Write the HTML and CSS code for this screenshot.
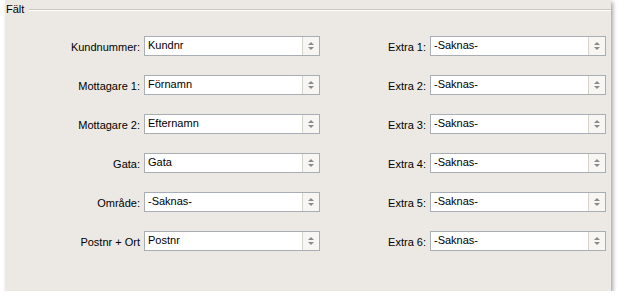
FILE: index.html
```html
<!DOCTYPE html>
<html lang="sv">
<head>
    <meta charset="UTF-8">
    <title>Fält</title>
    <link rel="stylesheet" href="styles.css">
</head>
<body>
    <div class="panel">
        <div class="legend"><span>Fält</span><div class="rule"></div></div>
        <div class="fields">
            <label>Kundnummer:</label>
            <div class="combo"><span>Kundnr</span><div class="spin"><i class="up"></i><i class="down"></i></div></div>
            <label>Extra 1:</label>
            <div class="combo"><span>-Saknas-</span><div class="spin"><i class="up"></i><i class="down"></i></div></div>

            <label>Mottagare 1:</label>
            <div class="combo"><span>Förnamn</span><div class="spin"><i class="up"></i><i class="down"></i></div></div>
            <label>Extra 2:</label>
            <div class="combo"><span>-Saknas-</span><div class="spin"><i class="up"></i><i class="down"></i></div></div>

            <label>Mottagare 2:</label>
            <div class="combo"><span>Efternamn</span><div class="spin"><i class="up"></i><i class="down"></i></div></div>
            <label>Extra 3:</label>
            <div class="combo"><span>-Saknas-</span><div class="spin"><i class="up"></i><i class="down"></i></div></div>

            <label>Gata:</label>
            <div class="combo"><span>Gata</span><div class="spin"><i class="up"></i><i class="down"></i></div></div>
            <label>Extra 4:</label>
            <div class="combo"><span>-Saknas-</span><div class="spin"><i class="up"></i><i class="down"></i></div></div>

            <label>Område:</label>
            <div class="combo"><span>-Saknas-</span><div class="spin"><i class="up"></i><i class="down"></i></div></div>
            <label>Extra 5:</label>
            <div class="combo"><span>-Saknas-</span><div class="spin"><i class="up"></i><i class="down"></i></div></div>

            <label>Postnr + Ort</label>
            <div class="combo"><span>Postnr</span><div class="spin"><i class="up"></i><i class="down"></i></div></div>
            <label>Extra 6:</label>
            <div class="combo"><span>-Saknas-</span><div class="spin"><i class="up"></i><i class="down"></i></div></div>
        </div>
    </div>
</body>
</html>
```

FILE: styles.css
```css
body {
    margin: 0;
    background: #fff;
    font-family: "Liberation Sans", Arial, sans-serif;
    font-size: 11px;
    color: #000;
}
.panel {
    margin-left: 5px;
    width: 606px;
    height: 291px;
    background: #ece9e4;
    box-shadow: 2px 2px 4px rgba(0, 0, 0, 0.35);
    box-sizing: border-box;
}
.legend { display: flex; align-items: center; padding: 3px 0 0 1px; height: 12px; }
.legend span { line-height: 12px; }
.rule { flex: 1; margin: 2px 0 0 5px; border-top: 1px solid #c8c5bd; border-bottom: 1px solid #fff; }
.fields {
    display: grid;
    grid-template-columns: 134px 176px 102px 176px;
    grid-auto-rows: 20px;
    column-gap: 4px;
    row-gap: 19px;
    padding: 21px 0 0 1px;
    align-items: center;
}
.fields label { text-align: right; padding-top: 2px; }
.combo {
    display: flex;
    height: 20px;
    box-sizing: border-box;
    border: 1px solid #a9aeb4;
    background: #fff;
}
.combo span { flex: 1; padding: 1px 0 0 3px; line-height: 14px; }
.spin {
    width: 16px;
    border-left: 1px solid #d6d3cc;
    background: #f7f6f3;
    display: flex;
    flex-direction: column;
    align-items: center;
    justify-content: center;
    gap: 2px;
}
.spin i { width: 0; height: 0; border-left: 3px solid transparent; border-right: 3px solid transparent; }
.spin .up { border-bottom: 3px solid #8a8a8a; }
.spin .down { border-top: 3px solid #8a8a8a; }
```
